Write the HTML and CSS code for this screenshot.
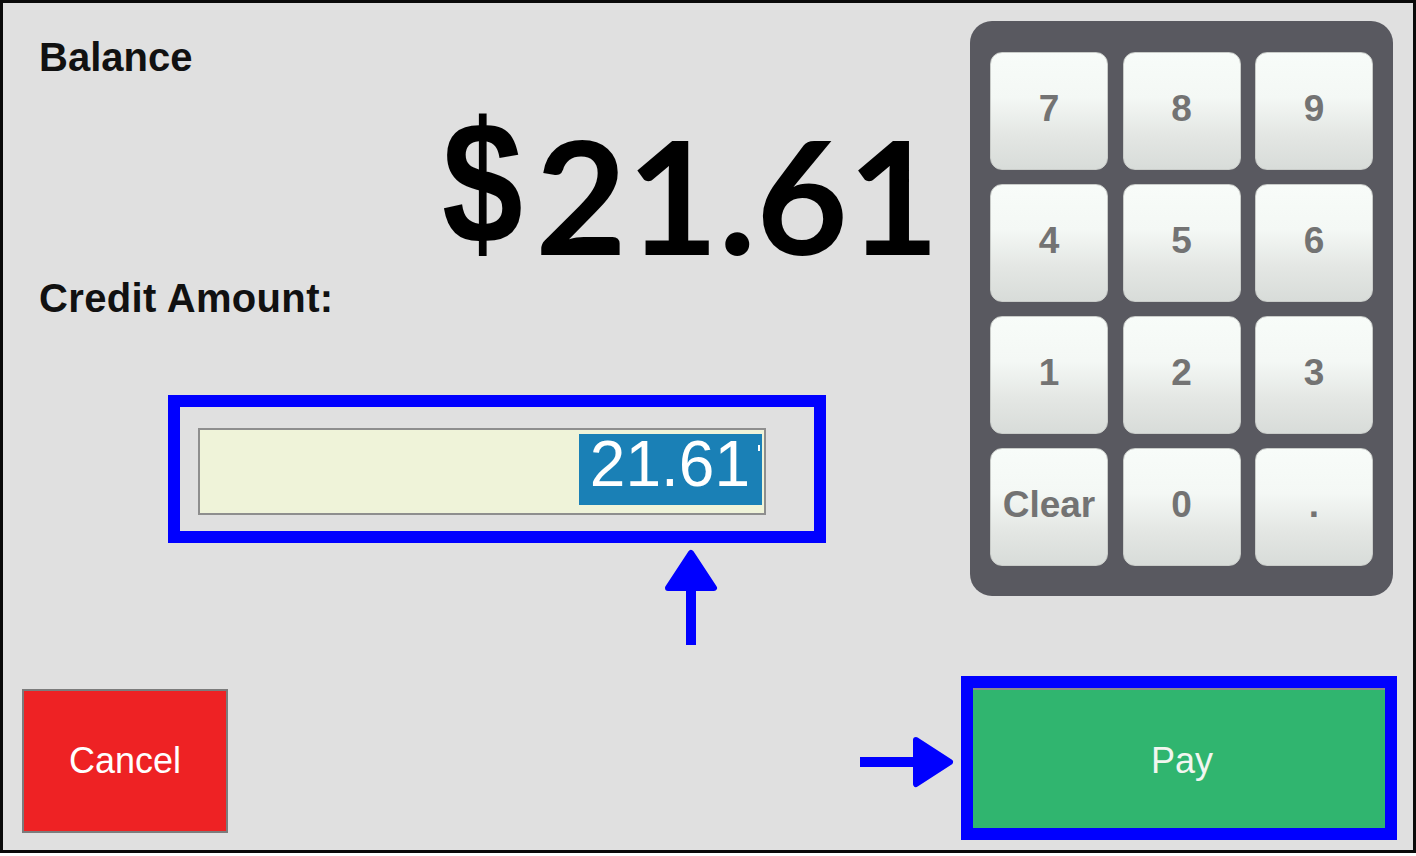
FILE: index.html
```html
<!DOCTYPE html>
<html>
<head>
<meta charset="utf-8">
<link rel="stylesheet" href="styles.css">
</head>
<body>
<div class="frame">
  <div class="main">
    <div class="left">
      <div class="label label-balance">Balance</div>
      <div class="balance-row"><span class="dollar">$</span><span class="amount">21.61</span></div>
      <div class="label label-credit">Credit Amount:</div>
      <div class="entry-box">
        <div class="input"><span class="selection">21.61</span></div>
      </div>
    </div>
    <div class="keypad">
      <div class="key">7</div><div class="key">8</div><div class="key">9</div>
      <div class="key">4</div><div class="key">5</div><div class="key">6</div>
      <div class="key">1</div><div class="key">2</div><div class="key">3</div>
      <div class="key">Clear</div><div class="key">0</div><div class="key">.</div>
    </div>
  </div>
  <div class="bottom">
    <div class="btn cancel">Cancel</div>
    <div class="pay-box"><div class="btn pay">Pay</div></div>
  </div>
  <svg class="arrows" width="1416" height="853" viewBox="0 0 1416 853">
    <rect x="686" y="585" width="10" height="60" fill="#0000ff"/>
    <polygon points="668,588 691,553 714,588" fill="#0000ff" stroke="#0000ff" stroke-width="6" stroke-linejoin="round"/>
    <rect x="860" y="757" width="58" height="10" fill="#0000ff"/>
    <polygon points="916,740 950,762 916,784" fill="#0000ff" stroke="#0000ff" stroke-width="6" stroke-linejoin="round"/>
  </svg>
</div>
</body>
</html>
```
FILE: styles.css
```css
html, body {
  margin: 0;
  padding: 0;
  background: #ffffff;
}

.frame {
  position: relative;
  width: 1416px;
  height: 853px;
  box-sizing: border-box;
  border: 3px solid #0a0a0a;
  background: #e0e0e0;
  display: flex;
  flex-direction: column;
  font-family: "Liberation Sans", Arial, sans-serif;
}

.main {
  display: flex;
  justify-content: space-between;
  align-items: flex-start;
  padding: 18px 20px 0 36px;
}

.left {
  display: flex;
  flex-direction: column;
  align-items: flex-start;
}

.label {
  font: bold 40px/40px "Liberation Sans", Arial, sans-serif;
  color: #111111;
}

.label-balance {
  margin-top: 16px;
}

.balance-row {
  display: flex;
  align-items: flex-start;
  margin: 20px 0 0 403px;
  color: #000000;
}

.dollar {
  display: block;
  font: bold 175px/175px "Liberation Sans", Arial, sans-serif;
  margin: -2px -4px 0 0;
  transform: scaleX(0.83);
  transform-origin: left top;
}

.amount {
  display: block;
  font: 700 158px/158px Lato, "Liberation Sans", sans-serif;
  margin-top: 18px;
}

.label-credit {
  margin-top: 5px;
  letter-spacing: 0.35px;
}

.entry-box {
  margin: 77px 0 0 129px;
  width: 658px;
  height: 148px;
  box-sizing: border-box;
  border: 12px solid #0000ff;
  padding: 21px 0 0 18px;
}

.input {
  width: 568px;
  height: 87px;
  box-sizing: border-box;
  border: 2px solid #8e8e8e;
  background: #eff3d9;
  display: flex;
  justify-content: flex-end;
  align-items: flex-start;
  padding: 4px 2px 0 0;
}

.selection {
  position: relative;
  display: block;
  width: 183px;
  height: 71px;
  box-sizing: border-box;
  background: #1a80b6;
  color: #ffffff;
  font: 64px/61px "Liberation Sans", Arial, sans-serif;
  text-align: right;
  padding-right: 12px;
}

.selection::after {
  content: "";
  position: absolute;
  right: 2px;
  top: 11px;
  width: 2px;
  height: 6px;
  background: #ffffff;
}

.keypad {
  display: grid;
  grid-template-columns: repeat(3, 118px);
  grid-auto-rows: 118px;
  column-gap: 14.5px;
  row-gap: 14px;
  padding: 31px 20px 30px 20px;
  background: #595960;
  border-radius: 22px;
}

.key {
  display: flex;
  align-items: center;
  justify-content: center;
  padding-bottom: 4px;
  box-sizing: border-box;
  border-radius: 12px;
  border: 1px solid #c9ccc9;
  background: linear-gradient(#f8fcf9 0%, #f4f8f5 38%, #e3e6e3 72%, #d8dcd9 100%);
  font: bold 37px "Liberation Sans", Arial, sans-serif;
  color: #737373;
}

.bottom {
  margin-top: auto;
  display: flex;
  justify-content: space-between;
  align-items: flex-end;
  padding: 0 16px 0 19px;
}

.btn {
  display: flex;
  align-items: center;
  justify-content: center;
  box-sizing: border-box;
  font: 36px "Liberation Sans", Arial, sans-serif;
}

.cancel {
  width: 206px;
  height: 144px;
  margin-bottom: 17px;
  background: #ee2224;
  border: 2px solid #7c7c7c;
  color: #ffffff;
}

.pay-box {
  width: 436px;
  height: 164px;
  box-sizing: border-box;
  border: 12px solid #0000ff;
  margin-bottom: 10px;
}

.pay {
  width: 100%;
  height: 100%;
  padding: 4px 0 0 6px;
  background: #30b56f;
  border-top: 2px solid #8a8a8a;
  color: #f2f6f0;
}

.arrows {
  position: absolute;
  left: -3px;
  top: -3px;
  pointer-events: none;
}
```
